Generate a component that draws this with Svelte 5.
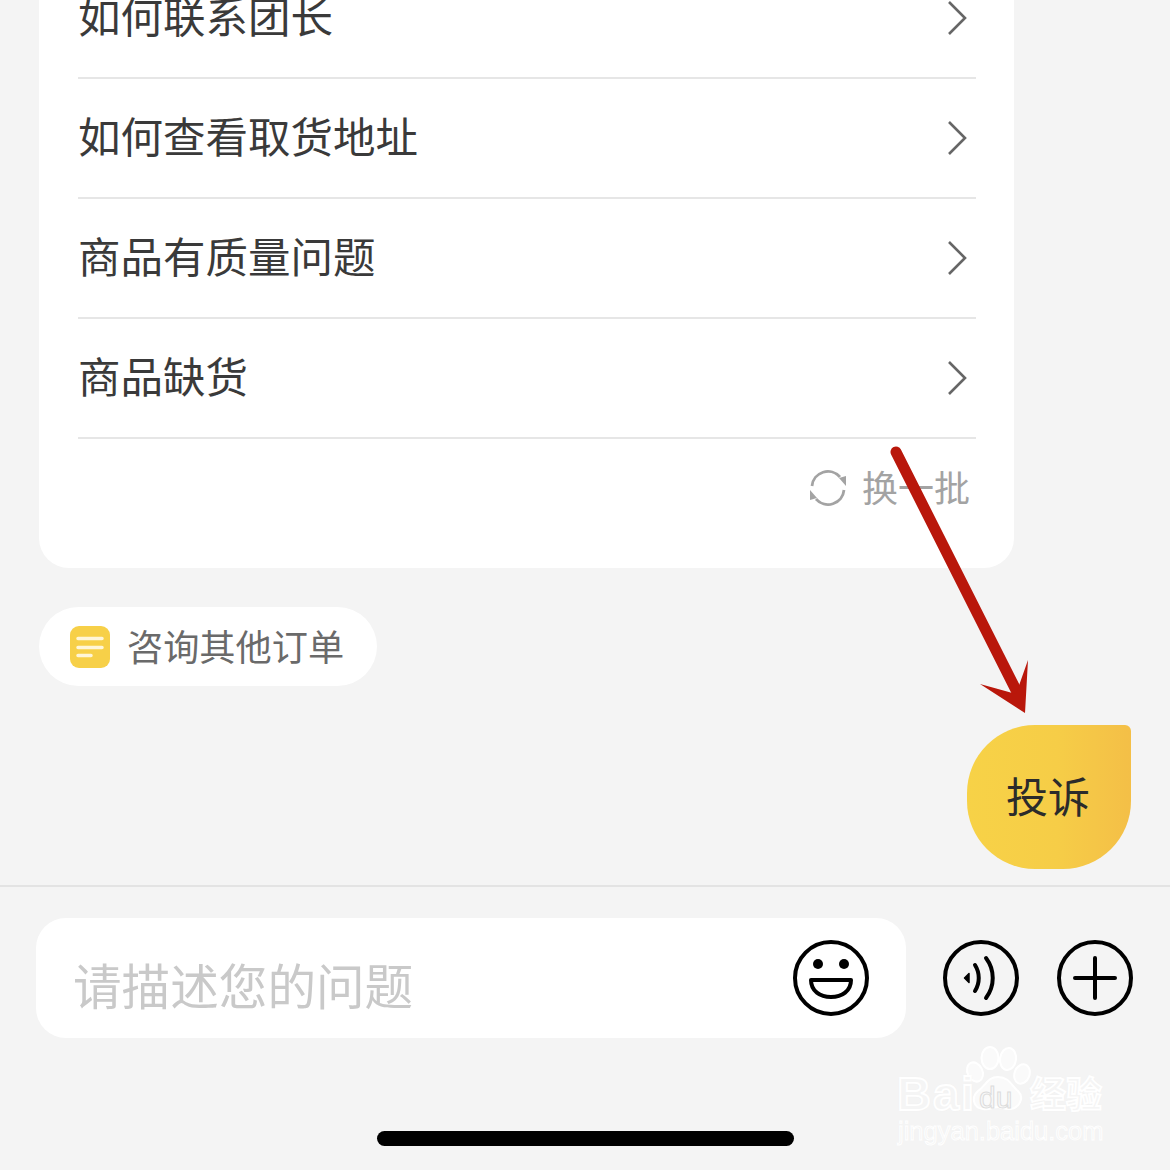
<script>
  const rows = ['如何联系团长', '如何查看取货地址', '商品有质量问题', '商品缺货'];
</script>

<div class="page">
  <section class="card">
    {#each rows as row}
      <div class="row">
        <span>{row}</span>
        <svg class="chev" width="24" height="38" viewBox="0 0 24 38"><path d="M3 3 L19 19 L3 35" /></svg>
      </div>
    {/each}
    <div class="swap">
      <svg width="38" height="38" viewBox="0 0 38 38" fill="none" stroke="#a3a3a3" stroke-width="2.8">
        <path d="M3 17 A16 16 0 0 1 31 8" />
        <path d="M35 21 A16 16 0 0 1 7 30" />
        <path d="M1 21 L1 31 L8 29 Z" fill="#a3a3a3" stroke="none" />
        <path d="M37 17 L37 7 L30 9 Z" fill="#a3a3a3" stroke="none" />
      </svg>
      <span>换一批</span>
    </div>
  </section>

  <div class="pill">
    <svg width="40" height="42" viewBox="0 0 40 42">
      <rect width="40" height="42" rx="9" fill="#f7d048" />
      <path d="M8 12.5 H32 M8 21.5 H32 M8 29.5 H21" stroke="#fff6d8" stroke-width="3.5" stroke-linecap="round" />
    </svg>
    <span>咨询其他订单</span>
  </div>

  <div class="fab-wrap">
    <button class="fab">投诉</button>
  </div>

  <footer class="bar">
    <div class="input">
      <span>请描述您的问题</span>
      <svg class="ic" width="78" height="78" viewBox="0 0 78 78" fill="none" stroke="#000" stroke-width="4">
        <circle cx="39" cy="39" r="36" />
        <circle cx="26" cy="25" r="5" fill="#000" stroke="none" />
        <circle cx="52" cy="25" r="5" fill="#000" stroke="none" />
        <path d="M19 41 H59 C59 52 50 58 39 58 C28 58 19 52 19 41 Z" stroke-linejoin="round" />
      </svg>
    </div>
    <svg class="ic" width="78" height="78" viewBox="0 0 78 78" fill="none" stroke="#000" stroke-width="4" stroke-linecap="round">
      <circle cx="39" cy="39" r="36" />
      <path d="M27 34.5 L22.5 39 L27 43.5 Z" fill="#000" stroke-width="1.5" stroke-linejoin="round" />
      <path d="M33 26 C38 34 38 44 33 52" />
      <path d="M44 19 C53 31 53 47 44 59" />
    </svg>
    <svg class="ic" width="78" height="78" viewBox="0 0 78 78" fill="none" stroke="#000" stroke-width="4" stroke-linecap="round">
      <circle cx="39" cy="39" r="36" />
      <path d="M19 39 H59 M39 19 V59" />
    </svg>
  </footer>

  <div class="home"></div>

  <svg class="arrow" width="1170" height="1170" viewBox="0 0 1170 1170">
    <path d="M896 452 L1019 696" stroke="#b9170b" stroke-width="11" stroke-linecap="round" fill="none" />
    <path d="M1025 713 L980 684 L1016 694 L1028 660 Z" fill="#b9170b" />
  </svg>

  <div class="mark">
    <svg class="paw" width="66" height="66" viewBox="0 0 66 66" fill="#fafafa" stroke="#fff" stroke-width="2">
      <ellipse cx="25" cy="13" rx="8.5" ry="11" />
      <ellipse cx="43" cy="14" rx="8" ry="11" transform="rotate(8 43 14)" />
      <ellipse cx="10" cy="27" rx="7.5" ry="10" transform="rotate(-25 10 27)" />
      <ellipse cx="57" cy="29" rx="7.5" ry="10" transform="rotate(20 57 29)" />
      <path d="M33 32 C45 32 47 42 53 46 C60 53 54 64 44 64 C38 64 36 62 33 62 C28 62 25 65 18 64 C8 63 6 52 13 46 C21 41 22 32 33 32 Z" />
    </svg>
    <span class="bai">Bai</span>
    <span class="du">du</span>
    <span class="jy">经验</span>
    <span class="url">jingyan.baidu.com</span>
  </div>
</div>

<style>
  :global(body) {
    margin: 0;
    background: #f4f4f4;
  }
  .page {
    position: relative;
    width: 1170px;
    height: 1170px;
    overflow: hidden;
    background: #f4f4f4;
    font-family: "Noto Sans CJK SC", "Liberation Sans", sans-serif;
  }
  .card {
    width: 975px;
    height: 609px;
    margin: -41px 0 0 39px;
    padding: 0 38px 0 39px;
    box-sizing: border-box;
    background: #fff;
    border-radius: 0 0 30px 30px;
  }
  .row {
    height: 120px;
    box-sizing: border-box;
    border-bottom: 2px solid #e6e6e6;
    display: flex;
    align-items: center;
    justify-content: space-between;
    font-size: 42.5px;
    color: #3a3a3a;
    padding-right: 6px;
  }
  .row span {
    line-height: 1;
    margin-top: -6px;
  }
  .chev {
    fill: none;
    stroke: #666;
    stroke-width: 2.6;
  }
  .swap {
    display: flex;
    align-items: center;
    justify-content: flex-end;
    gap: 15px;
    height: 100px;
    padding-right: 6px;
    color: #a3a3a3;
    font-size: 36px;
  }
  .swap span {
    margin-top: -6px;
  }
  .swap svg {
    margin-top: -3px;
  }
  .pill {
    display: flex;
    align-items: center;
    gap: 17px;
    width: 338px;
    height: 79px;
    margin: 39px 0 0 39px;
    padding-left: 31px;
    box-sizing: border-box;
    background: #fff;
    border-radius: 40px;
    color: #6a6a6a;
    font-size: 36.2px;
  }
  .pill span {
    margin-top: -4px;
  }
  .fab-wrap {
    display: flex;
    justify-content: flex-end;
    margin-top: 39px;
    padding-right: 39px;
  }
  .fab {
    width: 164px;
    height: 144px;
    padding: 0 2px 6px 0;
    border: 0;
    border-radius: 68px 6px 68px 68px;
    background: linear-gradient(90deg, #f7d247 0%, #f6cd47 55%, #f4bf47 100%);
    color: #2b2b2b;
    font: 42px "Noto Sans CJK SC", sans-serif;
  }
  .bar {
    display: flex;
    align-items: center;
    margin-top: 16px;
    padding: 31px 0 0 36px;
    border-top: 2px solid #e3e3e3;
  }
  .input {
    display: flex;
    align-items: center;
    justify-content: space-between;
    width: 870px;
    height: 120px;
    box-sizing: border-box;
    padding: 0 36px 0 37px;
    margin-right: 36px;
    background: #fff;
    border-radius: 30px;
    color: #c9c9c9;
    font-size: 48.6px;
  }
  .input span {
    margin-top: 12px;
    line-height: 1;
  }
  .bar > .ic {
    flex: none;
    margin-right: 36px;
  }
  .home {
    width: 417px;
    height: 15px;
    margin: 93px 0 0 377px;
    background: #000;
    border-radius: 8px;
  }
  .arrow {
    position: absolute;
    left: 0;
    top: 0;
    pointer-events: none;
  }
  .mark {
    position: absolute;
    left: 895px;
    top: 1045px;
    width: 215px;
    height: 100px;
    color: #f5f5f5;
    -webkit-text-stroke: 1.8px #fff;
    font-family: "Liberation Sans", sans-serif;
  }
  .mark span {
    position: absolute;
    line-height: 1;
    white-space: nowrap;
  }
  .paw {
    position: absolute;
    left: 70px;
    top: 0;
  }
  .bai {
    left: 2px;
    top: 25px;
    font-size: 47px;
    font-weight: 700;
    letter-spacing: 2px;
    text-shadow: 0 0 2px #e6e6e6;
  }
  .du {
    left: 84px;
    top: 38px;
    font-size: 30px;
    color: #f8f8f8;
    -webkit-text-stroke: 1px #dcdcdc;
  }
  .jy {
    left: 135px;
    top: 29px;
    font-size: 36px;
    font-family: "Noto Sans CJK SC", sans-serif;
    font-weight: 700;
    text-shadow: 0 0 2px #e6e6e6;
  }
  .url {
    left: 3px;
    top: 74px;
    font-size: 25.5px;
    -webkit-text-stroke: 1px #fff;
    text-shadow: 0 0 1px #e0e0e0;
  }
</style>
